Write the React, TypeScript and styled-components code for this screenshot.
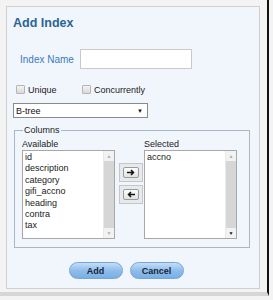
import React from "react";
import styled, { createGlobalStyle } from "styled-components";

const GlobalStyle = createGlobalStyle`
    html, body {
        margin: 0;
        padding: 0;
        background: #f3f3f3;
        font-family: "Liberation Sans", Arial, sans-serif;
    }
`;

const Screen = styled.div`
    width: 273px;
    height: 300px;
    display: flex;
    background: #f3f3f3;
    overflow: hidden;
`;

const Frame = styled.div`
    width: 269px;
    height: 296px;
    border-right: 2px solid #111;
    border-bottom: 4px solid #d6d6d6;
    display: flex;
    flex-direction: column;
    padding: 6px 7px 0 6px;
    box-sizing: border-box;
`;

const Panel = styled.div`
    height: 283px;
    border: 1px solid #cfcfcf;
    background: #f1f6fc;
    box-sizing: border-box;
    padding: 8px 8px 0 6px;
    display: flex;
    flex-direction: column;
`;

const Title = styled.h2`
    margin: 0;
    font-size: 12.5px;
    font-weight: bold;
    color: #2a6496;
    line-height: 16px;
`;

const NameRow = styled.div`
    display: flex;
    align-items: center;
    gap: 6px;
    margin: 18px 0 0 7px;
`;

const Label = styled.label`
    font-size: 10px;
    color: #3b7bbf;
`;

const TextInput = styled.input`
    width: 112px;
    height: 20px;
    box-sizing: border-box;
    border: 1px solid #c9c9c9;
    background: #fff;
    padding: 0 3px;
`;

const CheckRow = styled.div`
    display: flex;
    align-items: center;
    height: 11px;
    margin: 15px 0 0 3px;
`;

const CheckLabel = styled.label<{ $width: number }>`
    display: flex;
    align-items: center;
    gap: 3px;
    width: ${p => p.$width}px;
    font-size: 9px;
    color: #222;
`;

const Box = styled.span`
    width: 7px;
    height: 7px;
    border: 1px solid #b5b5b5;
    background: linear-gradient(#f4f4f4, #d9d9d9);
    border-radius: 1px;
`;

const Select = styled.div`
    margin: 8px 0 0 0;
    width: 135px;
    height: 15px;
    box-sizing: border-box;
    border: 1px solid #8a8a8a;
    background: #fff;
    display: flex;
    align-items: center;
    justify-content: space-between;
    padding: 0 4px 0 2px;
    font-size: 9px;
    color: #111;
`;

const Caret = styled.span`
    font-size: 6px;
    color: #111;
`;

const Fieldset = styled.fieldset`
    margin: 7px 0 0 1px;
    width: 236px;
    box-sizing: border-box;
    border: 1px solid #a9b7c6;
    padding: 0 12px 8px 7px;
    min-width: 0;
`;

const Legend = styled.legend`
    font-size: 9px;
    line-height: 11px;
    color: #222;
    padding: 0 1px;
    margin-left: 1px;
`;

const Lists = styled.div`
    display: flex;
    align-items: flex-start;
    margin-top: 3px;
`;

const ListCol = styled.div`
    display: flex;
    flex-direction: column;
    width: 93px;
`;

const ListLabel = styled.div`
    font-size: 9px;
    color: #222;
    line-height: 11px;
    height: 11px;
`;

const ListBox = styled.div`
    height: 89px;
    box-sizing: border-box;
    border: 1px solid #a8a8a8;
    background: #fff;
    display: flex;
`;

const Items = styled.div`
    flex: 1;
    display: flex;
    flex-direction: column;
    padding: 1px 0 0 2px;
`;

const Item = styled.div`
    font-size: 9px;
    line-height: 11.4px;
    color: #222;
`;

const Scroll = styled.div`
    width: 10px;
    background: #d6d6d6;
    border-left: 1px solid #e8e8e8;
    display: flex;
    flex-direction: column;
    justify-content: space-between;
    align-items: center;
`;

const ScrollBtn = styled.div<{ $dark?: boolean }>`
    width: 10px;
    height: 10px;
    background: #f2f2f2;
    display: flex;
    align-items: center;
    justify-content: center;
    font-size: 5px;
    color: ${p => (p.$dark ? "#111" : "#b0b0b0")};
`;

const Arrows = styled.div`
    width: 29px;
    display: flex;
    flex-direction: column;
    align-items: flex-start;
    gap: 3px;
    padding: 24px 0 0 4px;
    box-sizing: border-box;
`;

const ArrowFrame = styled.div`
    width: 24px;
    height: 19px;
    box-sizing: border-box;
    border: 1px solid #c6c6c6;
    background: #e6e9ed;
    padding: 3px;
    display: flex;
`;

const ArrowBtn = styled.div`
    flex: 1;
    box-sizing: border-box;
    border: 1px solid #9c9c9c;
    border-radius: 2px;
    background: linear-gradient(#fdfdfd, #e2e2e2);
    display: flex;
    align-items: center;
    justify-content: center;
`;

const Buttons = styled.div`
    display: flex;
    justify-content: center;
    gap: 7px;
    margin: 14px 0 0 0;
    padding-right: 12px;
`;

const PillButton = styled.button`
    width: 54px;
    height: 17px;
    border-radius: 9px;
    border: 1px solid #76a6d8;
    background: linear-gradient(#c4def6, #8fbdea 50%, #7aaee4);
    font-family: "Liberation Sans", Arial, sans-serif;
    font-size: 9px;
    font-weight: bold;
    color: #16263a;
    padding: 0;
`;

function Arrow({ dir }: { dir: "right" | "left" }) {
    return (
        <svg width="8" height="7" viewBox="0 0 8 7">
            {dir === "right" ? (
                <path d="M0 3.5h6M4 1L6.5 3.5 4 6" stroke="#111" strokeWidth="1.5" fill="none" />
            ) : (
                <path d="M8 3.5H2M4 1L1.5 3.5 4 6" stroke="#111" strokeWidth="1.5" fill="none" />
            )}
        </svg>
    );
}

function ColumnList({ label, items }: { label: string; items: string[] }) {
    return (
        <ListCol>
            <ListLabel>{label}</ListLabel>
            <ListBox>
                <Items>
                    {items.map(i => (
                        <Item key={i}>{i}</Item>
                    ))}
                </Items>
                <Scroll>
                    <ScrollBtn>▲</ScrollBtn>
                    <ScrollBtn $dark={label === "Selected"}>▼</ScrollBtn>
                </Scroll>
            </ListBox>
        </ListCol>
    );
}

export default function App() {
    const available = ["id", "description", "category", "gifi_accno", "heading", "contra", "tax"];

    return (
        <Screen>
            <GlobalStyle />
            <Frame>
                <Panel>
                    <Title>Add Index</Title>
                    <NameRow>
                        <Label>Index Name</Label>
                        <TextInput />
                    </NameRow>
                    <CheckRow>
                        <CheckLabel $width={66}>
                            <Box />
                            Unique
                        </CheckLabel>
                        <CheckLabel $width={90}>
                            <Box />
                            Concurrently
                        </CheckLabel>
                    </CheckRow>
                    <Select>
                        B-tree
                        <Caret>▼</Caret>
                    </Select>
                    <Fieldset>
                        <Legend>Columns</Legend>
                        <Lists>
                            <ColumnList label="Available" items={available} />
                            <Arrows>
                                <ArrowFrame>
                                    <ArrowBtn>
                                        <Arrow dir="right" />
                                    </ArrowBtn>
                                </ArrowFrame>
                                <ArrowFrame>
                                    <ArrowBtn>
                                        <Arrow dir="left" />
                                    </ArrowBtn>
                                </ArrowFrame>
                            </Arrows>
                            <ColumnList label="Selected" items={["accno"]} />
                        </Lists>
                    </Fieldset>
                    <Buttons>
                        <PillButton>Add</PillButton>
                        <PillButton>Cancel</PillButton>
                    </Buttons>
                </Panel>
            </Frame>
        </Screen>
    );
}
